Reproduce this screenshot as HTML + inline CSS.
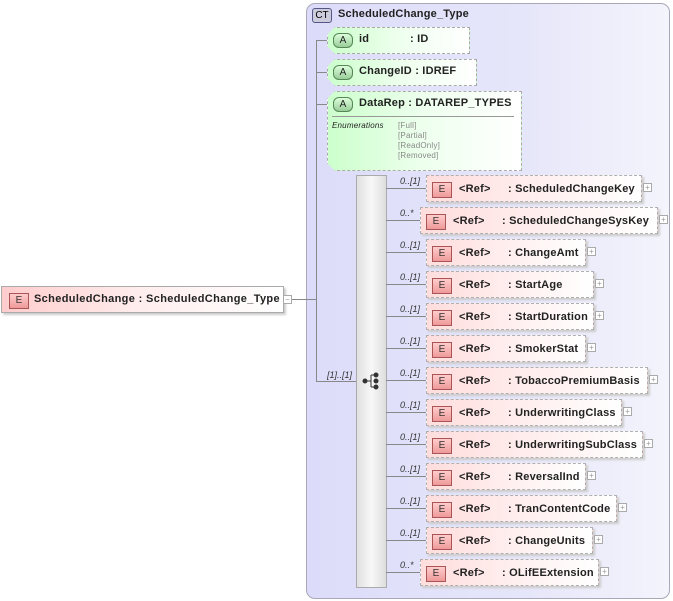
<html><head><style>
body{margin:0;width:673px;height:601px;background:#fff;position:relative;font-family:"Liberation Sans",sans-serif;overflow:hidden}
.a{position:absolute}
.ct{left:306px;top:3px;width:362px;height:594px;border:1px solid #a8a8b8;border-radius:9px;background:linear-gradient(90deg,#dcdcfa,#e6e6fa 60%,#f4f4fc)}
.ln{position:absolute;background:#888}
.el{position:absolute;height:25px;border:1px dashed #b0b0b0;background:linear-gradient(90deg,#fdd 0%,#fee 50%,#fff 100%);box-shadow:2px 2px 2px #ccc;font-size:11px;font-weight:bold;color:#222;letter-spacing:0.2px}
.eb{position:absolute;left:5px;top:6px;width:18px;height:14px;border:1px solid #a55;background:linear-gradient(#fcc,#e99);font-size:10px;font-weight:normal;text-align:center;line-height:14px;color:#333}
.el .r{position:absolute;left:32px;top:7px}
.el .n{position:absolute;left:81px;top:7px;white-space:nowrap}
.pl{position:absolute;width:7px;height:7px;border:1px solid #aaa;background:#fff;font-size:8px;line-height:7px;text-align:center;color:#999}
.m{position:absolute;font-size:9px;font-style:italic;color:#333}
.at{position:absolute;border:1px dashed #aaa;background:linear-gradient(90deg,#cfc,#efe 50%,#fff);font-size:11px;font-weight:bold;color:#222;letter-spacing:0.2px;clip-path:polygon(8px 0,100% 0,100% 100%,8px 100%,0 calc(100% - 8px),0 8px)}
.ab{position:absolute;left:5px;top:5px;width:18px;height:13px;border:1px solid #585;border-radius:6px;background:linear-gradient(#dfd,#9c9);font-size:10px;font-weight:normal;text-align:center;line-height:13px}
</style></head><body>
<div class="a ct"></div>
<div class="a" style="left:312px;top:8px;width:18px;height:13px;border:1px solid #558;border-radius:3px;background:#ccd;font-size:10px;text-align:center;line-height:13px">CT</div>
<div class="a" style="left:338px;top:8px;font-size:11px;font-weight:bold;color:#222;letter-spacing:0.2px">ScheduledChange_Type</div>

<div class="el" style="left:1px;top:286px;width:281px;height:25px;border:1px solid #aaa;background:linear-gradient(90deg,#fcc,#fee 50%,#fff)"><div class="eb" style="left:7px">E</div><span class="a" style="left:32px;top:6px;letter-spacing:0.35px">ScheduledChange : ScheduledChange_Type</span></div>
<div class="pl" style="left:283px;top:295px">−</div>
<div class="ln" style="left:292px;top:299px;width:25px;height:1px"></div>
<div class="ln" style="left:316px;top:40px;width:1px;height:342px"></div>
<div class="ln" style="left:316px;top:40px;width:12px;height:1px"></div>
<div class="ln" style="left:316px;top:72px;width:12px;height:1px"></div>
<div class="ln" style="left:316px;top:104px;width:12px;height:1px"></div>
<div class="ln" style="left:316px;top:381px;width:40px;height:1px"></div>
<div class="m" style="left:327px;top:370px">[1]..[1]</div>

<div class="at" style="left:327px;top:27px;width:141px;height:25px"><div class="ab">A</div><span class="a" style="left:31px;top:5px">id</span><span class="a" style="left:82px;top:5px">: ID</span></div>
<div class="at" style="left:327px;top:59px;width:148px;height:25px"><div class="ab">A</div><span class="a" style="left:31px;top:5px">ChangeID : IDREF</span></div>
<div class="at" style="left:327px;top:91px;width:193px;height:78px"><div class="ab">A</div><span class="a" style="left:31px;top:5px">DataRep : DATAREP_TYPES</span>
<div class="a" style="left:4px;top:24px;width:182px;height:1px;background:#999"></div>
<span class="a" style="left:4px;top:29px;font-size:8px;font-style:italic;font-weight:normal">Enumerations</span>
<span class="a" style="left:70px;top:29px;font-size:8px;font-weight:normal;color:#888;line-height:10px">[Full]<br>[Partial]<br>[ReadOnly]<br>[Removed]</span></div>

<div class="a" style="left:356px;top:175px;width:29px;height:411px;border:1px solid #aaa;background:linear-gradient(90deg,#e0e0e0,#f8f8f8 50%,#ddd)"></div>
<svg class="a" style="left:362px;top:372px" width="20" height="18"><g fill="#333" stroke="#333"><circle cx="3" cy="9" r="2"/><circle cx="14" cy="3" r="2"/><circle cx="14" cy="9" r="2"/><circle cx="14" cy="15" r="2"/><path d="M3 9H9M9 3V15M9 3H14M9 15H14" fill="none"/></g></svg>

<div class="ln" style="left:386px;top:188px;width:40px;height:1px"></div><div class="m" style="left:400px;top:176px">0..[1]</div>
<div class="el" style="left:426px;top:175px;width:214px"><div class="eb">E</div><span class="r">&lt;Ref&gt;</span><span class="n">: ScheduledChangeKey</span></div><div class="pl" style="left:643px;top:183px">+</div>

<div class="ln" style="left:386px;top:220px;width:34px;height:1px"></div><div class="m" style="left:400px;top:208px">0..*</div>
<div class="el" style="left:420px;top:207px;width:236px"><div class="eb">E</div><span class="r">&lt;Ref&gt;</span><span class="n">: ScheduledChangeSysKey</span></div><div class="pl" style="left:659px;top:215px">+</div>

<div class="ln" style="left:386px;top:252px;width:40px;height:1px"></div><div class="m" style="left:400px;top:240px">0..[1]</div>
<div class="el" style="left:426px;top:239px;width:158px"><div class="eb">E</div><span class="r">&lt;Ref&gt;</span><span class="n">: ChangeAmt</span></div><div class="pl" style="left:587px;top:247px">+</div>

<div class="ln" style="left:386px;top:284px;width:40px;height:1px"></div><div class="m" style="left:400px;top:272px">0..[1]</div>
<div class="el" style="left:426px;top:271px;width:166px"><div class="eb">E</div><span class="r">&lt;Ref&gt;</span><span class="n">: StartAge</span></div><div class="pl" style="left:595px;top:279px">+</div>

<div class="ln" style="left:386px;top:316px;width:40px;height:1px"></div><div class="m" style="left:400px;top:304px">0..[1]</div>
<div class="el" style="left:426px;top:303px;width:166px"><div class="eb">E</div><span class="r">&lt;Ref&gt;</span><span class="n">: StartDuration</span></div><div class="pl" style="left:595px;top:311px">+</div>

<div class="ln" style="left:386px;top:348px;width:40px;height:1px"></div><div class="m" style="left:400px;top:336px">0..[1]</div>
<div class="el" style="left:426px;top:335px;width:158px"><div class="eb">E</div><span class="r">&lt;Ref&gt;</span><span class="n">: SmokerStat</span></div><div class="pl" style="left:587px;top:343px">+</div>

<div class="ln" style="left:386px;top:380px;width:40px;height:1px"></div><div class="m" style="left:400px;top:368px">0..[1]</div>
<div class="el" style="left:426px;top:367px;width:220px"><div class="eb">E</div><span class="r">&lt;Ref&gt;</span><span class="n">: TobaccoPremiumBasis</span></div><div class="pl" style="left:649px;top:375px">+</div>

<div class="ln" style="left:386px;top:412px;width:40px;height:1px"></div><div class="m" style="left:400px;top:400px">0..[1]</div>
<div class="el" style="left:426px;top:399px;width:194px"><div class="eb">E</div><span class="r">&lt;Ref&gt;</span><span class="n">: UnderwritingClass</span></div><div class="pl" style="left:623px;top:407px">+</div>

<div class="ln" style="left:386px;top:444px;width:40px;height:1px"></div><div class="m" style="left:400px;top:432px">0..[1]</div>
<div class="el" style="left:426px;top:431px;width:215px"><div class="eb">E</div><span class="r">&lt;Ref&gt;</span><span class="n">: UnderwritingSubClass</span></div><div class="pl" style="left:644px;top:439px">+</div>

<div class="ln" style="left:386px;top:476px;width:40px;height:1px"></div><div class="m" style="left:400px;top:464px">0..[1]</div>
<div class="el" style="left:426px;top:463px;width:158px"><div class="eb">E</div><span class="r">&lt;Ref&gt;</span><span class="n">: ReversalInd</span></div><div class="pl" style="left:587px;top:471px">+</div>

<div class="ln" style="left:386px;top:508px;width:40px;height:1px"></div><div class="m" style="left:400px;top:496px">0..[1]</div>
<div class="el" style="left:426px;top:495px;width:189px"><div class="eb">E</div><span class="r">&lt;Ref&gt;</span><span class="n">: TranContentCode</span></div><div class="pl" style="left:618px;top:503px">+</div>

<div class="ln" style="left:386px;top:540px;width:40px;height:1px"></div><div class="m" style="left:400px;top:528px">0..[1]</div>
<div class="el" style="left:426px;top:527px;width:165px"><div class="eb">E</div><span class="r">&lt;Ref&gt;</span><span class="n">: ChangeUnits</span></div><div class="pl" style="left:594px;top:535px">+</div>

<div class="ln" style="left:386px;top:572px;width:34px;height:1px"></div><div class="m" style="left:400px;top:560px">0..*</div>
<div class="el" style="left:420px;top:559px;width:177px"><div class="eb">E</div><span class="r">&lt;Ref&gt;</span><span class="n">: OLifEExtension</span></div><div class="pl" style="left:600px;top:567px">+</div>
</body></html>
